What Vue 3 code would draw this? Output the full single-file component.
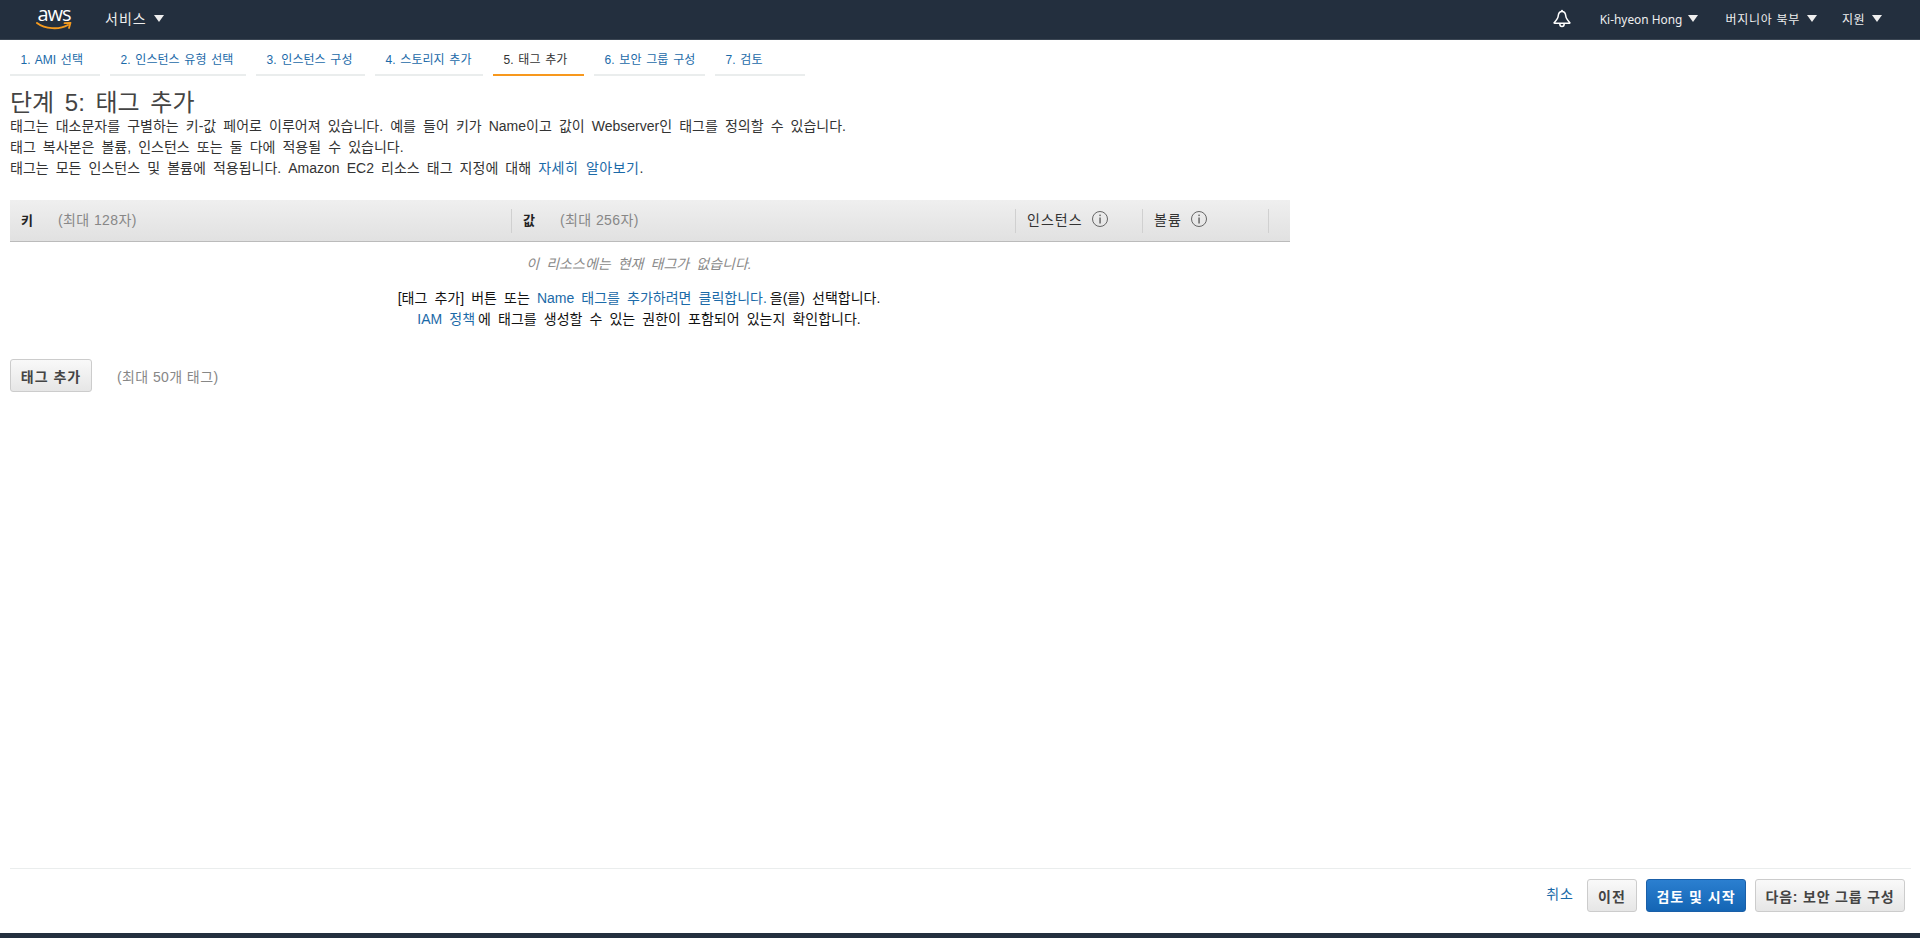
<script setup>
const tabs = [
  { label: '1. AMI 선택', width: 90 },
  { label: '2. 인스턴스 유형 선택', width: 136 },
  { label: '3. 인스턴스 구성', width: 109 },
  { label: '4. 스토리지 추가', width: 108 },
  { label: '5. 태그 추가', width: 91, active: true },
  { label: '6. 보안 그룹 구성', width: 111 },
  { label: '7. 검토', width: 90 },
]
</script>

<template>
  <div class="page">
    <header class="topbar">
      <div class="logo">
        <span class="logo-text">aws</span>
        <svg class="smile" width="36" height="8" viewBox="0 0 36 8">
          <path d="M1 1C9 7 23 8 32 3" fill="none" stroke="#f49a1f" stroke-width="2" stroke-linecap="round" />
          <path d="M28.5 1.2L34.5 .8L33 6" fill="none" stroke="#f49a1f" stroke-width="1.8" stroke-linejoin="round" stroke-linecap="round" />
        </svg>
      </div>
      <div class="services">서비스<span class="caret"></span></div>
      <div class="spacer"></div>
      <svg class="bell" width="18" height="19" viewBox="0 0 18 19">
        <circle cx="9" cy="1.8" r="1" fill="#fff" />
        <path d="M9 2.5C6.5 2.5 5.4 4.5 5.2 7C5 9.6 3.2 11.4 1.2 13.6C1 13.9 1.1 14.2 1.5 14.2H16.5C16.9 14.2 17 13.9 16.8 13.6C14.8 11.4 13 9.6 12.8 7C12.6 4.5 11.5 2.5 9 2.5Z" fill="none" stroke="#fff" stroke-width="1.5" stroke-linejoin="round" />
        <path d="M6.8 14.8C6.8 16.6 7.8 17.6 9 17.6C10.2 17.6 11.2 16.6 11.2 14.8" fill="none" stroke="#fff" stroke-width="1.5" />
      </svg>
      <div class="menu user">Ki-hyeon Hong<span class="caret"></span></div>
      <div class="menu region">버지니아 북부<span class="caret"></span></div>
      <div class="menu support">지원<span class="caret"></span></div>
    </header>

    <main class="main">
      <nav class="tabs">
        <a v-for="t in tabs" :key="t.label" class="tab" :class="{ active: t.active }" :style="{ width: t.width + 'px' }">{{ t.label }}</a>
      </nav>

      <h1 class="title">단계 5: 태그 추가</h1>
      <div class="desc">
        <div>태그는 대소문자를 구별하는 키-값 페어로 이루어져 있습니다. 예를 들어 키가 Name이고 값이 Webserver인 태그를 정의할 수 있습니다.</div>
        <div>태그 복사본은 볼륨, 인스턴스 또는 둘 다에 적용될 수 있습니다.</div>
        <div>태그는 모든 인스턴스 및 볼륨에 적용됩니다. Amazon EC2 리소스 태그 지정에 대해 <a class="link wide">자세히 알아보기</a>.</div>
      </div>

      <section class="table">
        <div class="thead">
          <div class="col col-key"><b>키</b><span class="hint">(최대 128자)</span></div>
          <div class="col col-val"><b>값</b><span class="hint">(최대 256자)</span></div>
          <div class="col col-inst">
            <span class="th-label">인스턴스</span>
            <svg class="info" width="18" height="18" viewBox="0 0 18 18"><circle cx="9" cy="9" r="7.5" fill="none" stroke="#666" /><rect x="8.4" y="7.5" width="1.3" height="6" fill="#555" /><rect x="8.4" y="4.6" width="1.3" height="1.5" fill="#555" /></svg>
          </div>
          <div class="col col-vol">
            <span class="th-label">볼륨</span>
            <svg class="info" width="18" height="18" viewBox="0 0 18 18"><circle cx="9" cy="9" r="7.5" fill="none" stroke="#666" /><rect x="8.4" y="7.5" width="1.3" height="6" fill="#555" /><rect x="8.4" y="4.6" width="1.3" height="1.5" fill="#555" /></svg>
          </div>
          <div class="col col-end"></div>
        </div>
        <div class="body-msg">
          <div class="empty">이 리소스에는 현재 태그가 없습니다.</div>
          <div class="help">
            <div>[태그 추가] 버튼 또는 <a class="link">Name 태그를 추가하려면 클릭합니다.</a><span class="tight">을(를) 선택합니다.</span></div>
            <div><a class="link">IAM 정책</a><span class="tight">에 태그를 생성할 수 있는 권한이 포함되어 있는지 확인합니다.</span></div>
          </div>
        </div>
      </section>

      <div class="add-row">
        <button class="btn add">태그 추가</button>
        <span class="hint limit">(최대 50개 태그)</span>
      </div>

      <footer class="footer">
        <a class="link cancel">취소</a>
        <button class="btn prev">이전</button>
        <button class="btn primary">검토 및 시작</button>
        <button class="btn next">다음: 보안 그룹 구성</button>
      </footer>
    </main>

    <div class="bottombar"></div>
  </div>
</template>

<style>
html, body { margin: 0; padding: 0; background: #fff; }
</style>

<style scoped>
.page {
  height: 938px;
  overflow: hidden;
  display: flex;
  flex-direction: column;
  font-family: "Liberation Sans", "Noto Sans CJK KR", sans-serif;
  font-size: 14px;
  color: #333;
}
.topbar {
  height: 39px;
  flex: none;
  background: #232f3e;
  border-bottom: 1px solid #3b4653;
  display: flex;
  align-items: center;
  color: #eee;
}
.logo {
  margin-left: 36px;
  width: 36px;
  align-self: flex-start;
  padding-top: 6px;
  display: flex;
  flex-direction: column;
  align-items: center;
}
.logo-text {
  font-family: "Open Sans", sans-serif;
  color: #fff;
  font-size: 20px;
  line-height: 15px;
  letter-spacing: -1px;
}
.smile { margin-top: 1px; }
.services {
  margin-left: 33px;
  margin-top: -3px;
  font-size: 14px;
  letter-spacing: 1px;
  display: flex;
  align-items: center;
}
.caret {
  display: inline-block;
  width: 0;
  height: 0;
  margin-left: 7px;
  border-left: 5px solid transparent;
  border-right: 5px solid transparent;
  border-top: 7px solid #eee;
}
.spacer { flex: 1; }
.bell { margin-right: 29px; margin-top: -2px; }
.menu { font-size: 12px; display: flex; align-items: center; margin-top: -2px; }
.user { margin-right: 27px; font-family: "Noto Sans", sans-serif; font-size: 11.9px; }
.user .caret { margin-left: 6px; }
.region { margin-right: 25px; letter-spacing: .7px; }
.support { margin-right: 38px; letter-spacing: .5px; }

.main {
  flex: 1;
  min-height: 0;
  display: flex;
  flex-direction: column;
  padding: 0 9px 0 10px;
}
.tabs { display: flex; gap: 10px; margin-top: 10px; }
.tab {
  box-sizing: border-box;
  height: 26px;
  padding: 2px 0 0 10.5px;
  font-size: 12px;
  line-height: 16px;
  word-spacing: 1.5px;
  color: #1b6aa8;
  border-bottom: 2px solid #eaeded;
  white-space: nowrap;
}
.tab.active { color: #333; border-bottom-color: #f7981d; }
.title {
  margin: 12px 0 0;
  font-size: 24px;
  line-height: 30px;
  font-weight: 400;
  word-spacing: 4px;
  color: #444;
}
.desc { font-size: 14px; line-height: 21px; margin-top: -2px; word-spacing: 3.2px; color: #333; }
.link { color: #1b6aa8; }
.wide { letter-spacing: .5px; }
.tight { margin-left: 3px; }

.table { margin-top: 21px; width: 1280px; }
.thead {
  box-sizing: border-box;
  height: 42px;
  display: flex;
  align-items: center;
  background: linear-gradient(#efefef, #e1e1e1);
  border-bottom: 1px solid #bbb;
}
.col {
  box-sizing: border-box;
  height: 24px;
  display: flex;
  align-items: center;
  border-right: 1px solid #d0d0d0;
  padding-bottom: 3px;
}
.col-key { width: 502px; padding-left: 11px; }
.col-val { width: 504px; padding-left: 11px; }
.col-inst { width: 127px; padding-left: 11px; }
.col-vol { width: 126px; padding-left: 11px; }
.col-end { border: none; }
.col b { width: 26px; color: #222; font-size: 13px; }
.hint { color: #878787; font-size: 14px; letter-spacing: .4px; margin-left: 11px; }
.th-label { color: #333; letter-spacing: 1px; }
.info { margin-left: 8px; }
.body-msg { width: 1258px; text-align: center; word-spacing: 3.2px; }
.empty {
  font-style: italic;
  color: #8a8a8a;
  margin-top: 13px;
  line-height: 18px;
}
.help {
  color: #111;
  margin-top: 15px;
  line-height: 21px;
}
.add-row { display: flex; align-items: center; margin-top: 29px; }
.btn {
  box-sizing: border-box;
  height: 33px;
  padding: 0;
  font-family: inherit;
  font-size: 14px;
  font-weight: 700;
  letter-spacing: 1px;
  color: #444;
  border: 1px solid #ccc;
  border-radius: 3px;
  background: linear-gradient(#f9f9f9, #e6e6e6);
}
.add { width: 82px; }
.limit { margin-left: 25px; }
.footer {
  margin-top: auto;
  margin-bottom: 21px;
  border-top: 1px solid #eaeded;
  padding-top: 10px;
  display: flex;
  align-items: flex-start;
  justify-content: flex-end;
  gap: 9px;
  padding-right: 6px;
}
.cancel { font-size: 14px; letter-spacing: 1px; margin-right: 4px; line-height: 31px; }
.prev { width: 50px; }
.primary {
  width: 100px;
  color: #fff;
  border-color: #1a5fa8;
  background: linear-gradient(#2b7fd0, #1465b4);
}
.next { width: 150px; letter-spacing: .8px; }
.bottombar { flex: none; height: 5px; background: #232f3e; }
</style>
